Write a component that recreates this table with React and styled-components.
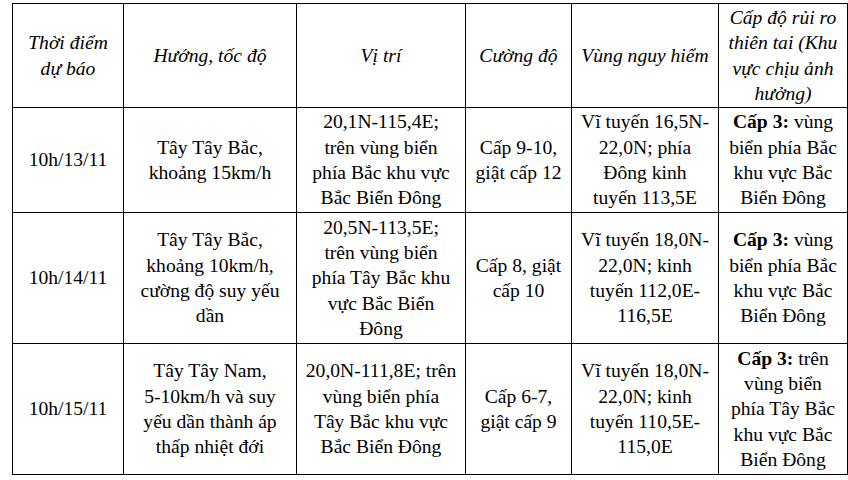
import React from 'react'
import styled, { createGlobalStyle } from 'styled-components'

const GlobalStyle = createGlobalStyle`
  body {
    margin: 0;
    background: #fff;
    font-family: "Liberation Serif", "Times New Roman", serif;
  }
`

const Page = styled.div`
  padding: 3px 0 0 12px;
  width: 848px;
  height: 480px;
  overflow: hidden;
  box-sizing: border-box;
`

const Table = styled.table`
  border-collapse: collapse;
  table-layout: fixed;
  width: 835px;
  color: #000;
`

const Col = styled.col`
  width: ${p => p.$w}px;
`

const Cell = styled.td`
  border: 1px solid #000;
  padding: 0 2px;
  text-align: center;
  vertical-align: middle;
  white-space: nowrap;
  height: ${p => p.$h}px;
  font-family: "Liberation Serif", "Times New Roman", serif;
  font-size: 19.6px;
  line-height: 25.3px;
  font-weight: 400;
  font-style: ${p => (p.$head ? 'italic' : 'normal')};
`

const Strong = styled.b`
  font-weight: 700;
`

const widths = [111, 173, 169, 106, 147, 129]

const header = [
  ['Thời điểm', 'dự báo'],
  ['Hướng, tốc độ'],
  ['Vị trí'],
  ['Cường độ'],
  ['Vùng nguy hiểm'],
  ['Cấp độ rủi ro', 'thiên tai (Khu', 'vực chịu ảnh', 'hưởng)'],
]

const rows = [
  {
    h: 104,
    cells: [
      ['10h/13/11'],
      ['Tây Tây Bắc,', 'khoảng 15km/h'],
      ['20,1N-115,4E;', 'trên vùng biển', 'phía Bắc khu vực', 'Bắc Biển Đông'],
      ['Cấp 9-10,', 'giật cấp 12'],
      ['Vĩ tuyến 16,5N-', '22,0N; phía', 'Đông kinh', 'tuyến 113,5E'],
    ],
    risk: ['vùng', 'biển phía Bắc', 'khu vực Bắc', 'Biển Đông'],
  },
  {
    h: 130,
    cells: [
      ['10h/14/11'],
      ['Tây Tây Bắc,', 'khoảng 10km/h,', 'cường độ suy yếu', 'dần'],
      ['20,5N-113,5E;', 'trên vùng biển', 'phía Tây Bắc khu', 'vực Bắc Biển', 'Đông'],
      ['Cấp 8, giật', 'cấp 10'],
      ['Vĩ tuyến 18,0N-', '22,0N; kinh', 'tuyến 112,0E-', '116,5E'],
    ],
    risk: ['vùng', 'biển phía Bắc', 'khu vực Bắc', 'Biển Đông'],
  },
  {
    h: 130,
    cells: [
      ['10h/15/11'],
      ['Tây Tây Nam,', '5-10km/h và suy', 'yếu dần thành áp', 'thấp nhiệt đới'],
      ['20,0N-111,8E; trên', 'vùng biển phía', 'Tây Bắc khu vực', 'Bắc Biển Đông'],
      ['Cấp 6-7,', 'giật cấp 9'],
      ['Vĩ tuyến 18,0N-', '22,0N; kinh', 'tuyến 110,5E-', '115,0E'],
    ],
    risk: ['trên', 'vùng biển', 'phía Tây Bắc', 'khu vực Bắc', 'Biển Đông'],
  },
]

function Lines({ lines }) {
  return lines.map((line, i) => (
    <React.Fragment key={i}>
      {i > 0 && <br />}
      {line}
    </React.Fragment>
  ))
}

export default function App() {
  return (
    <Page>
      <GlobalStyle />
      <Table>
        <colgroup>
          {widths.map((w, i) => <Col key={i} $w={w} />)}
        </colgroup>
        <thead>
          <tr>
            {header.map((lines, i) => (
              <Cell as="th" key={i} $head $h={103}>
                <Lines lines={lines} />
              </Cell>
            ))}
          </tr>
        </thead>
        <tbody>
          {rows.map((row, r) => (
            <tr key={r}>
              {row.cells.map((lines, i) => (
                <Cell key={i} $h={row.h}>
                  <Lines lines={lines} />
                </Cell>
              ))}
              <Cell $h={row.h}>
                <Strong>Cấp 3:</Strong> {row.risk[0]}
                {row.risk.slice(1).map((line, i) => (
                  <React.Fragment key={i}>
                    <br />
                    {line}
                  </React.Fragment>
                ))}
              </Cell>
            </tr>
          ))}
        </tbody>
      </Table>
    </Page>
  )
}
